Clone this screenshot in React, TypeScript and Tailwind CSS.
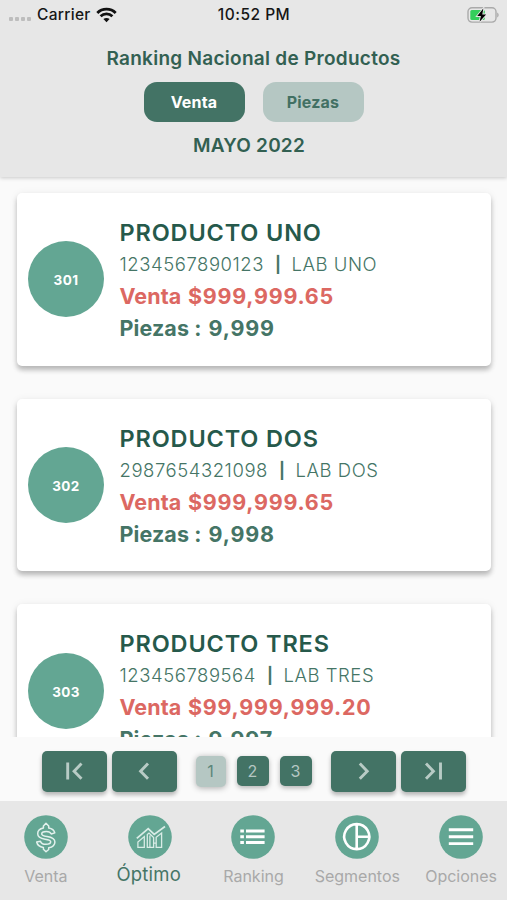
import React, { useState } from "react";

type Product = {
  rank: number;
  name: string;
  code: string;
  lab: string;
  venta: string;
  piezas: string;
};

const products: Product[] = [
  { rank: 301, name: "PRODUCTO UNO", code: "1234567890123", lab: "LAB UNO", venta: "$999,999.65", piezas: "9,999" },
  { rank: 302, name: "PRODUCTO DOS", code: "2987654321098", lab: "LAB DOS", venta: "$999,999.65", piezas: "9,998" },
  { rank: 303, name: "PRODUCTO TRES", code: "123456789564", lab: "LAB TRES", venta: "$99,999,999.20", piezas: "9,997" },
];

const StatusBar = () => (
  <div className="flex h-[29px] items-center justify-between pl-[9px] pr-[8px] text-[15.5px] font-medium leading-[20px] text-[#161616]">
    <div className="flex w-[180px] items-center">
      <div className="mt-[9px] flex gap-[2px]">
        {[0, 1, 2, 3].map((i) => (
          <span key={i} className="h-[4px] w-[4px] rounded-[1px] bg-[#bdbdbd]" />
        ))}
      </div>
      <span className="ml-[6px] tracking-[0.3px]">Carrier</span>
      <svg className="ml-[5px]" width="21" height="16" viewBox="0 0 21 16" fill="none" stroke="#111" strokeWidth="2.8">
        <path d="M1.3 5.9C6.3.9 14.7.9 19.7 5.9" />
        <path d="M4.6 9.3c3.3-3.2 8.5-3.2 11.8 0" />
        <path d="M10.5 15.2 7.4 12.1c1.8-1.6 4.4-1.6 6.2 0z" fill="#111" stroke="none" />
      </svg>
    </div>
    <span className="tracking-[0.5px]">10:52 PM</span>
    <div className="flex w-[180px] justify-end">
      <svg width="33" height="18" viewBox="0 0 33 18" fill="none">
        <rect x="2" y="1.7" width="28" height="14.4" rx="4" stroke="#aaa" strokeWidth="1.4" />
        <path d="M31.2 6.6c1.9.7 1.9 4.1 0 4.9z" fill="#aaa" />
        <rect x="4.3" y="4" width="14.5" height="10" rx="1.5" fill="#35ce5c" />
        <path
          d="M17.3 2.6 11.2 10h3.7l-1.3 5.8 6.5-7.4h-3.8z"
          fill="#000"
          stroke="#e7e7e7"
          strokeWidth="1.8"
          paintOrder="stroke"
        />
      </svg>
    </div>
  </div>
);

const ProductCard = ({ product }: { product: Product }) => (
  <div className="flex h-[172.7px] shrink-0 items-center rounded-[5px] bg-white pl-[11px] shadow-[0_4px_5px_rgba(0,0,0,0.24),0_1px_8px_rgba(0,0,0,0.07)]">
    <div className="flex h-[76px] w-[76px] shrink-0 items-center justify-center rounded-full bg-[#63a693] pt-[2px] text-[13.5px] font-bold tracking-[0.4px] text-white">
      {product.rank}
    </div>
    <div className="ml-[15.5px] whitespace-nowrap pt-[1px] text-[#457566]">
      <div className="pt-px text-[23.5px] font-semibold leading-[32px] tracking-[0.85px] text-[#26594b]">{product.name}</div>
      <div className="text-[18.5px] font-[360] leading-[31px] tracking-[0.55px]">
        {product.code}
        <span className="relative -top-px ml-[11px] mr-[10px] text-[16px] font-bold">|</span>
        {product.lab}
      </div>
      <div className="text-[21.5px] font-[650] leading-[31px] text-[#dc6862]">
        <span className="mr-[6.5px] tracking-[0.1px]">Venta</span>
        <span className="tracking-[0.76px]">{product.venta}</span>
      </div>
      <div className="text-[21.5px] font-[650] leading-[32px]">
        <span className="mr-[7px] tracking-[0.1px]">Piezas :</span>
        <span className="tracking-[0.85px]">{product.piezas}</span>
      </div>
    </div>
  </div>
);

const PageArrow = ({ children, onClick }: { children: React.ReactNode; onClick: () => void }) => (
  <button
    onClick={onClick}
    className="flex h-[41px] w-[65px] items-center justify-center rounded-[5px] bg-[#437365] shadow-[0_3px_4px_rgba(0,0,0,0.28)]"
  >
    <svg width="30" height="24" viewBox="0 0 30 24" fill="none" stroke="#b8cbc5" strokeWidth="2.9">
      {children}
    </svg>
  </button>
);

const Pagination = () => {
  const [page, setPage] = useState(1);

  return (
    <div className="flex h-[64px] shrink-0 items-start bg-[#fafafa] pl-[42px] pt-[13.5px]">
      <div className="flex gap-[5px]">
        <PageArrow onClick={() => setPage(1)}>
          <path d="M7.7 3.5v17M21.5 4.6l-7.4 7.6 7.4 7.6" />
        </PageArrow>
        <PageArrow onClick={() => setPage(Math.max(1, page - 1))}>
          <path d="M18 4.6l-7.4 7.6 7.4 7.6" />
        </PageArrow>
      </div>
      <div className="ml-[18.5px] mt-[5px] flex items-center gap-[11px]">
        {[1, 2, 3].map((n) => (
          <button
            key={n}
            onClick={() => setPage(n)}
            className={
              n === page
                ? "h-[31px] w-[30px] rounded-[5px] bg-[#b5c7c3] text-[16px] text-[#5c867a] shadow-[0_1px_6px_rgba(0,0,0,0.32)]"
                : "h-[30px] w-[32px] rounded-[5px] bg-[#437365] text-[16px] text-[#b5c7c3] shadow-[0_2px_5px_rgba(0,0,0,0.28)]"
            }
          >
            {n}
          </button>
        ))}
      </div>
      <div className="ml-[19px] flex gap-[5px]">
        <PageArrow onClick={() => setPage(Math.min(3, page + 1))}>
          <path d="M11.8 4.6l7.4 7.6-7.4 7.6" />
        </PageArrow>
        <PageArrow onClick={() => setPage(3)}>
          <path d="M8 4.6l7.4 7.6-7.4 7.6M22.5 3.5v17" />
        </PageArrow>
      </div>
    </div>
  );
};

const tabs = [
  {
    label: "Venta",
    icon: (
      <g stroke="#e3f1ed" strokeWidth="1.5" strokeLinejoin="round">
        <path d="M22 8.2l2.7 2.8v2.1c3.3.6 5.5 2.4 6.1 4.8l-3.5 1.1c-.7-1.6-2.4-2.6-5-2.6-2.8 0-4.6 1-4.6 2.5 0 1.7 2 2 5.3 2.5 4.3.6 7.9 1.9 7.9 5.5 0 3-2.5 5.2-6.2 5.8v1.8L22 36.8l-2.6-2.5v-1.8c-3.7-.6-6.1-2.6-6.7-5.5l3.7-.8c.6 2.1 2.5 3.1 5.5 3.1 3.1 0 4.8-.9 4.8-2.5 0-1.8-2.2-2.1-5.7-2.6-4.1-.6-7.3-1.9-7.3-5.4 0-3 2.2-5.1 5.7-5.7V11z" />
      </g>
    ),
  },
  {
    label: "Óptimo",
    icon: (
      <g stroke="#d9ece6" strokeWidth="1.3">
        <path d="M8.8 23.4l11.4-9.8 6 5.8L37 11.6" strokeWidth="1.8" />
        <path d="M9.9 32.4V27l6.4-5.4v10.8zM19.3 32.4V19.6l1.7-1.5 4.6 4.5v9.8zM28.2 32.4V22.2l5.4-4.2v14.4zM21.9 32V20.4M25.6 28.2h2.6" />
      </g>
    ),
  },
  {
    label: "Ranking",
    icon: <path d="M9.3 16h3.6M9.3 21.7h3.6M9.3 27.4h3.6M15 16h18.6M15 21.7h18.6M15 27.4h18.6" stroke="#fff" strokeWidth="3" />,
  },
  {
    label: "Segmentos",
    icon: <path d="M21.7 9.1a12.5 12.5 0 1 0 .1 0zM21.7 9v25.2M22 21.8h12.3" stroke="#fff" strokeWidth="2.6" />,
  },
  {
    label: "Opciones",
    icon: <path d="M9.8 14.8h24.4M9.8 21.7h24.4M9.8 28.6h24.4" stroke="#fff" strokeWidth="2.9" />,
  },
];

const TabBar = () => {
  const [active, setActive] = useState("Óptimo");

  return (
    <nav className="h-[99px] shrink-0 overflow-hidden bg-[#e7e7e7] pt-[14px]">
      <div className="-ml-[6px] grid w-[519px] grid-cols-5">
        {tabs.map((tab) => (
          <button key={tab.label} onClick={() => setActive(tab.label)} className="flex flex-col items-center">
            <svg width="44" height="44" viewBox="0 0 44 44" fill="none">
              <circle cx="22" cy="22" r="21.8" fill="#63a693" />
              {tab.icon}
            </svg>
            <span
              className={
                tab.label === active
                  ? "mt-[3px] pr-[2px] text-[18.5px] leading-[24px] tracking-[0.2px] text-[#457566]"
                  : "mt-[6px] text-[16px] leading-[22px] text-[#a9a9a9]"
              }
            >
              {tab.label}
            </span>
          </button>
        ))}
      </div>
    </nav>
  );
};

export default function App() {
  const [metric, setMetric] = useState<"venta" | "piezas">("venta");
  const selected = "bg-[#437365] text-white";
  const idle = "bg-[#b5c7c3] text-[#427063]";

  return (
    <div className="flex h-[900px] w-[507px] flex-col overflow-hidden bg-[#fafafa] font-['Inter','Liberation_Sans',sans-serif]">
      <header className="relative z-10 h-[177px] shrink-0 bg-[#e7e7e7] shadow-[0_1px_4px_rgba(0,0,0,0.2)]">
        <StatusBar />
        <div className="flex flex-col items-center text-[#326052]">
          <h1 className="mt-[16.5px] text-[19px] font-semibold leading-[26px] tracking-[0.28px]">Ranking Nacional de Productos</h1>
          <div className="mt-[10.5px] flex gap-[18px] text-[16px] font-bold tracking-[0.2px]">
            <button
              onClick={() => setMetric("venta")}
              className={`h-[40px] w-[101px] rounded-[13px] ${metric === "venta" ? selected : idle}`}
            >
              Venta
            </button>
            <button
              onClick={() => setMetric("piezas")}
              className={`h-[40px] w-[101px] rounded-[13px] ${metric === "piezas" ? selected : idle}`}
            >
              Piezas
            </button>
          </div>
          <h2 className="mt-[11px] pr-[9px] text-[19px] font-semibold leading-[26px] tracking-[0.2px]">MAYO 2022</h2>
        </div>
      </header>

      <main className="flex h-[560px] shrink-0 flex-col gap-[33px] overflow-hidden pl-[17px] pr-[16px] pt-[16px]">
        {products.map((p) => (
          <ProductCard key={p.rank} product={p} />
        ))}
      </main>

      <Pagination />
      <TabBar />
    </div>
  );
}
